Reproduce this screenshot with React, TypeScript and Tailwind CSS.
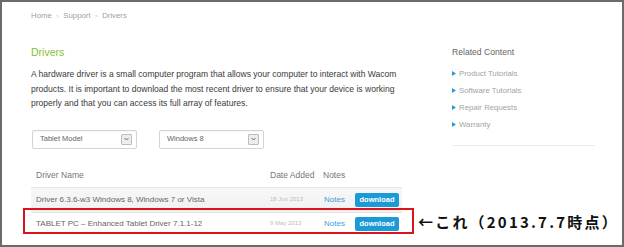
import React from "react";

const related = ["Product Tutorials", "Software Tutorials", "Repair Requests", "Warranty"];

function Select({ label }: { label: string }) {
  return (
    <div className="flex h-[19px] w-[105px] items-center justify-between rounded-[2px] border border-[#d4d4d4] bg-white pl-[7px] pr-[4px] shadow-[inset_0_1px_1px_rgba(0,0,0,0.04)]">
      <span className="text-[7.5px] text-[#666]">{label}</span>
      <span className="flex h-[11px] w-[11px] items-center justify-center rounded-[1px] border border-[#bdbdbd] bg-[#ededed]">
        <svg width="5" height="4" viewBox="0 0 5 4">
          <path d="M0.5 1 L2.5 3 L4.5 1" fill="none" stroke="#666" strokeWidth="1" />
        </svg>
      </span>
    </div>
  );
}

function Row({ name, date, shaded, marked }: { name: string; date: string; shaded?: boolean; marked?: boolean }) {
  return (
    <div
      className={
        "relative flex items-center border-t border-[#e6e6e6] " +
        (shaded ? "h-[25px] bg-gradient-to-b from-[#f7f7f7] to-[#f1f1f1]" : "h-[23px] bg-white")
      }
    >
      <span className="w-[239px] pl-[5px] text-[8px] text-[#666]">{name}</span>
      <span className="w-[54px] text-[6px] text-[#bbb]">{date}</span>
      <span className="w-[31px] text-[8px] text-[#3a9fd8]">Notes</span>
      <span className="flex h-[14px] w-[44px] items-center justify-center rounded-[2px] bg-[#1c9ad6] text-[7.5px] font-bold text-white">
        download
      </span>
      {marked && (
        <div className="absolute top-[-5px] bottom-[1px] left-[-8px] right-[-12px] border-2 border-[#d9141b]">
          <span className="absolute left-full top-1/2 ml-[6px] -translate-y-1/2 whitespace-nowrap font-['Noto_Sans_CJK_JP',sans-serif] text-[15px] font-bold leading-none tracking-[2.2px] text-[#111]">
            ←これ（2013.7.7時点）
          </span>
        </div>
      )}
    </div>
  );
}

export default function App() {
  return (
    <div className="h-[247px] w-[624px] overflow-hidden border-2 border-[#6b6b6b] bg-white font-['Liberation_Sans',Arial,sans-serif]">
      <div className="pl-[29px] pt-[9px]">
        <div className="flex items-center gap-[4px] text-[7.8px] leading-[10px] text-[#a0a0a0]">
          <span>Home</span>
          <span className="text-[6px] text-[#ccc]">&gt;</span>
          <span>Support</span>
          <span className="text-[6px] text-[#ccc]">&gt;</span>
          <span>Drivers</span>
        </div>

        <div className="mt-[25px] flex gap-[37px]">
          <div className="w-[384px]">
            <h1 className="text-[10.5px] leading-[13px] text-[#86bf2e]">Drivers</h1>
            <p className="mt-[8px] whitespace-nowrap text-[8.55px] leading-[14.5px] text-[#3a3a3a]">
              A hardware driver is a small computer program that allows your computer to interact with Wacom
              <br />
              products. It is important to download the most recent driver to ensure that your device is working
              <br />
              properly and that you can access its full array of features.
            </p>

            <div className="mt-[19px] flex gap-[22px] pl-[1px]">
              <Select label="Tablet Model" />
              <Select label="Windows 8" />
            </div>

            <div className="mt-[16px] w-[371px]">
              <div className="flex h-[22px] items-center text-[8.5px] text-[#777]">
                <span className="w-[239px] pl-[5px]">Driver Name</span>
                <span className="w-[53px]">Date Added</span>
                <span>Notes</span>
              </div>
              <Row name="Driver 6.3.6-w3 Windows 8, Windows 7 or Vista" date="18 Jun 2013" shaded />
              <Row name="TABLET PC – Enhanced Tablet Driver 7.1.1-12" date="9 May 2013" marked />
            </div>
          </div>

          <div className="w-[143px]">
            <h2 className="text-[8.6px] leading-[12px] text-[#666]">Related Content</h2>
            <ul className="mt-[10px] flex flex-col gap-[6px] pb-[15px]">
              {related.map((r) => (
                <li key={r} className="flex h-[11px] items-center gap-[3px] text-[7.8px] text-[#a3a3a3]">
                  <svg width="4" height="5" viewBox="0 0 4 5">
                    <path d="M0 0 L4 2.5 L0 5 Z" fill="#2a9bd4" />
                  </svg>
                  <span>{r}</span>
                </li>
              ))}
            </ul>
            <div className="h-px bg-[#ececec]" />
          </div>
        </div>
      </div>
    </div>
  );
}
